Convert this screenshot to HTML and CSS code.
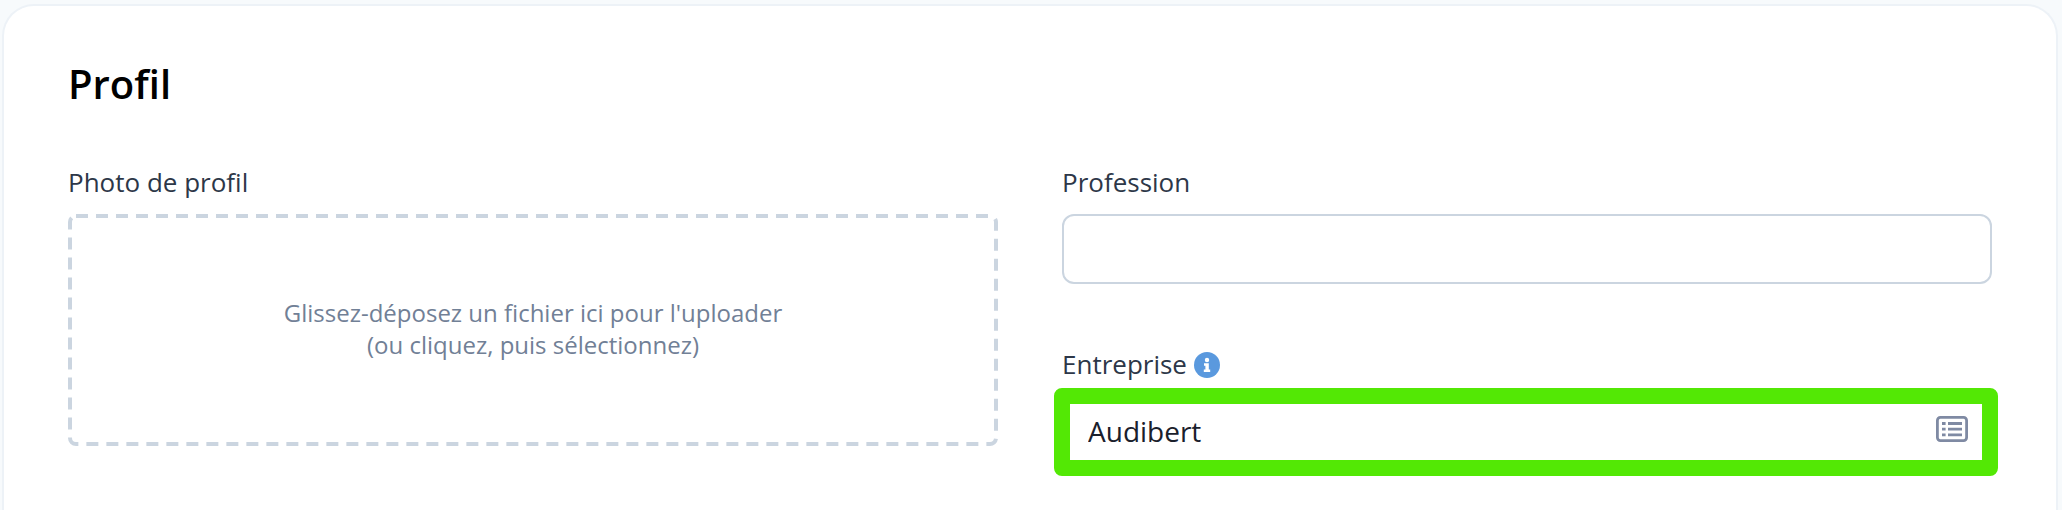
FILE: index.html
```html
<!DOCTYPE html>
<html lang="fr">
<head>
    <meta charset="UTF-8">
    <meta name="viewport" content="width=device-width, initial-scale=1.0">
    <title>Profil</title>
    <link rel="stylesheet" href="styles.css">
</head>
<body>
    <form class="card">
        <h1>Profil</h1>

        <div class="columns">
            <div class="form-group">
                <label for="photo">Photo de profil</label>
                <label class="dropzone" for="photo">
                    <svg class="dropzone-border" aria-hidden="true">
                        <rect x="2" y="2" rx="6"/>
                    </svg>
                    <span>Glissez-déposez un fichier ici pour l'uploader<br>(ou cliquez, puis sélectionnez)</span>
                </label>
                <input class="file-input" type="file" id="photo" accept="image/*">
            </div>

            <div class="column">
                <div class="form-group">
                    <label for="profession">Profession</label>
                    <input class="text-input" type="text" id="profession">
                </div>

                <div class="form-group">
                    <label for="entreprise">Entreprise
                        <svg class="info-icon" viewBox="0 0 26 26" aria-hidden="true">
                            <circle cx="13" cy="13" r="13" fill="#5a99de"/>
                            <circle cx="13" cy="8" r="2.2" fill="#fff"/>
                            <path d="M10 11.2h4.8v6.2h1.4v2.6h-6.4v-2.6h1.6v-3.6H10z" fill="#fff"/>
                        </svg>
                    </label>
                    <div class="highlight">
                        <input class="text-input" type="text" id="entreprise" value="Audibert">
                        <svg class="list-icon" viewBox="0 0 32 26" aria-hidden="true">
                            <rect x="1.4" y="1.4" width="29.2" height="23.2" rx="3" fill="none" stroke="#7f8aa3" stroke-width="2.8"/>
                            <path d="M6 7.5h3.6M6 13.2h3.6M6 18.9h3.6M12 7.5H26M12 13.2H26M12 18.9H26" stroke="#7f8aa3" stroke-width="2.8"/>
                        </svg>
                    </div>
                </div>
            </div>
        </div>
    </form>
</body>
</html>
```

FILE: styles.css
```css
* {
    margin: 0;
    padding: 0;
    box-sizing: border-box;
}

body {
    display: flex;
    min-height: 100vh;
    padding: 4px 4px 0 2px;
    background: #f7fafc;
    color: #2d3748;
    font-family: "Open Sans", "Noto Sans", sans-serif;
    font-size: 26px;
    line-height: 36px;
}

.card {
    flex: 1;
    padding: 54px 64px 32px;
    background: #fff;
    border: 2px solid #edf2f7;
    border-bottom: 0;
    border-radius: 32px 32px 0 0;
}

h1 {
    margin-bottom: 56px;
    color: #000;
    font-size: 40px;
    font-weight: 600;
    line-height: 48px;
}

.columns {
    display: grid;
    grid-template-columns: 1fr 1fr;
    gap: 64px;
}

.column {
    display: flex;
    flex-direction: column;
    gap: 62px;
}

.form-group {
    position: relative;
    display: flex;
    flex-direction: column;
    gap: 14px;
}

.text-input {
    width: 100%;
    height: 70px;
    padding: 0 24px;
    background: #fff;
    border: 2px solid #cbd5e0;
    border-radius: 12px;
    color: #1a202c;
    font-family: inherit;
    font-size: 28px;
}

.dropzone {
    position: relative;
    display: flex;
    align-items: center;
    justify-content: center;
    height: 232px;
    padding-bottom: 2px;
    color: #718096;
    font-size: 24px;
    line-height: 32px;
    text-align: center;
    cursor: pointer;
}

.dropzone-border {
    position: absolute;
    inset: 0;
    width: 100%;
    height: 100%;
}

.dropzone-border rect {
    width: calc(100% - 4px);
    height: calc(100% - 4px);
    fill: none;
    stroke: #cbd5e0;
    stroke-width: 4px;
    stroke-dasharray: 12 8;
}

.file-input {
    position: absolute;
    width: 1px;
    height: 1px;
    opacity: 0;
}

.info-icon {
    width: 26px;
    height: 26px;
    vertical-align: -4px;
}

.highlight {
    position: relative;
}

/* green frame laid over the field */
.highlight::after {
    content: "";
    position: absolute;
    inset: -8px -6px -10px -8px;
    border: 16px solid #53e805;
    border-radius: 8px;
    pointer-events: none;
}

.list-icon {
    position: absolute;
    top: 20px;
    right: 24px;
    width: 32px;
    height: 26px;
}

@media (max-width: 768px) {
    .columns {
        grid-template-columns: 1fr;
    }
}
```
